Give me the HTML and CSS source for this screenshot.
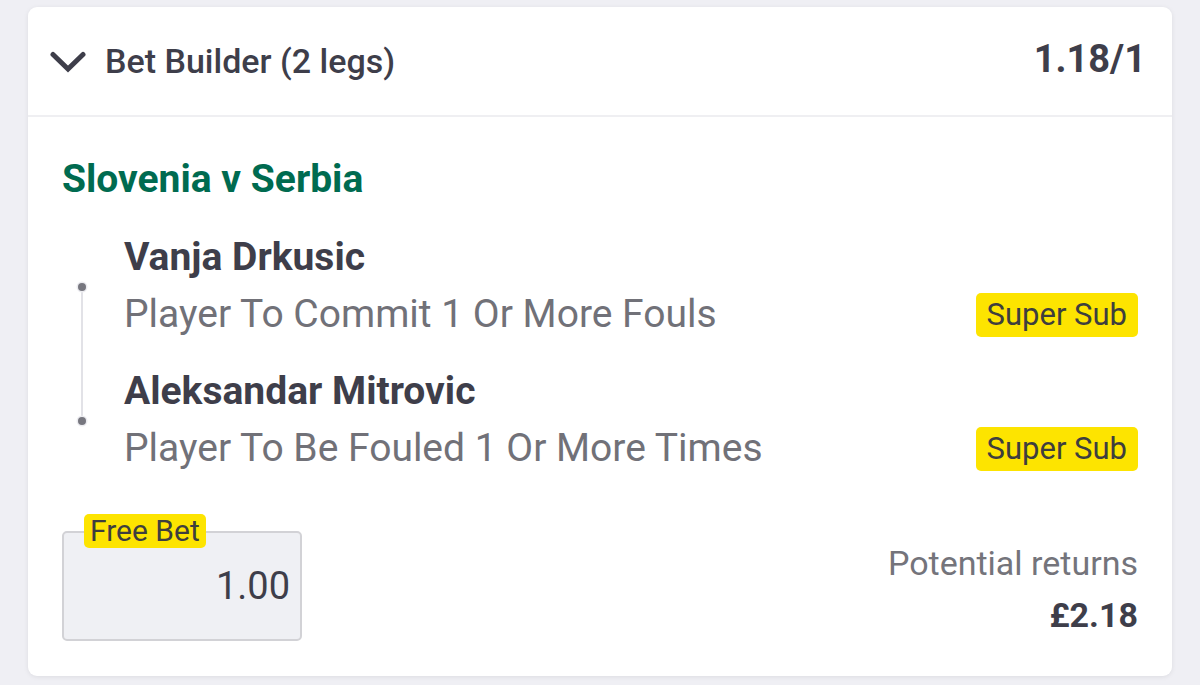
FILE: index.html
```html
<!DOCTYPE html>
<html>
<head>
<meta charset="utf-8">
<link rel="stylesheet" href="styles.css">
</head>
<body>
<div class="card">
  <div class="header">
    <div class="title">
      <svg class="chev" width="36" height="24" viewBox="0 0 36 24"><path d="M3 4.5 L18 19 L33 4.5" fill="none" stroke="#3e3e4a" stroke-width="5" stroke-linecap="round" stroke-linejoin="miter"/></svg>
      <span>Bet Builder (2 legs)</span>
    </div>
    <div class="odds">1.18/1</div>
  </div>
  <div class="body">
    <div class="match">Slovenia v Serbia</div>
    <div class="legs">
      <div class="rail"><span class="line"></span><span class="dot d1"></span><span class="dot d2"></span></div>
      <div class="leg">
        <div class="player">Vanja Drkusic</div>
        <div class="row"><span class="market">Player To Commit 1 Or More Fouls</span><span class="badge">Super Sub</span></div>
      </div>
      <div class="leg">
        <div class="player">Aleksandar Mitrovic</div>
        <div class="row"><span class="market">Player To Be Fouled 1 Or More Times</span><span class="badge">Super Sub</span></div>
      </div>
    </div>
    <div class="footer">
      <div class="stake">
        <span class="fb">Free Bet</span>
        <span class="amt">1.00</span>
      </div>
      <div class="returns">
        <div class="rl">Potential returns</div>
        <div class="rv">£2.18</div>
      </div>
    </div>
  </div>
</div>
</body>
</html>
```
FILE: styles.css
```css
html, body { margin: 0; padding: 0; }
body {
  background: #efeff4;
  font-family: Roboto, "Liberation Sans", sans-serif;
  width: 1200px;
  height: 685px;
  overflow: hidden;
  padding-top: 7px;
  box-sizing: border-box;
}
.card {
  margin-left: 28px;
  width: 1144px;
  height: 669px;
  background: #fff;
  border-radius: 9px;
  box-shadow: 0 1px 5px rgba(0,0,0,0.08);
  box-sizing: border-box;
}
.header {
  height: 110px;
  border-bottom: 2px solid #efeff2;
  display: flex;
  align-items: center;
  justify-content: space-between;
  padding: 0 26px 0 22px;
  box-sizing: border-box;
  color: #3e3e4a;
}
.title { display: flex; align-items: center; font-size: 34px; font-weight: 500; }
.chev { margin-right: 19px; margin-top: 1px; }
.odds { font-size: 38px; font-weight: 700; margin-top: -4px; }
.body { padding: 40px 34px 0 34px; }
.match { color: #006b50; font-size: 39px; font-weight: 700; line-height: 44px; }
.legs {
  position: relative;
  padding-left: 62px;
  margin-top: 34px;
  display: flex;
  flex-direction: column;
  gap: 20px;
}
.rail { position: absolute; left: 16px; top: 48px; width: 8px; height: 142px; }
.line { position: absolute; left: 3px; top: 4px; width: 2px; height: 134px; background: #e2e2e7; }
.dot {
  position: absolute;
  left: 0;
  width: 8px;
  height: 8px;
  border-radius: 50%;
  background: #77777f;
  box-shadow: 0 0 0 1.5px #ececf0;
}
.d1 { top: 0; }
.d2 { top: 134px; }
.player { font-size: 39px; font-weight: 700; color: #3e3e4a; line-height: 44px; }
.row { display: flex; justify-content: space-between; align-items: center; height: 70px; }
.market { font-size: 39px; color: #717178; line-height: 70px; }
.badge {
  background: #fde400;
  border-radius: 5px;
  font-size: 31px;
  color: #3e3e3e;
  padding: 0 11px;
  line-height: 44px;
  margin-top: 2px;
}
.footer { display: flex; justify-content: space-between; margin-top: 48px; }
.stake {
  position: relative;
  width: 240px;
  height: 110px;
  background: #eff0f4;
  border: 2px solid #d2d2d6;
  border-radius: 5px;
  box-sizing: border-box;
  display: flex;
  align-items: center;
  justify-content: flex-end;
  padding-right: 10px;
}
.fb {
  position: absolute;
  left: 20px;
  top: -19px;
  background: #fde400;
  border-radius: 5px;
  font-size: 30px;
  line-height: 34px;
  padding: 0 6px;
  color: #3e3e3e;
}
.amt { font-size: 38px; color: #3e3e4a; }
.returns { text-align: right; padding-top: 10px; }
.rl { font-size: 34px; color: #74747b; line-height: 44px; }
.rv { font-size: 34px; font-weight: 700; color: #3e3e4a; line-height: 60px; }
```
